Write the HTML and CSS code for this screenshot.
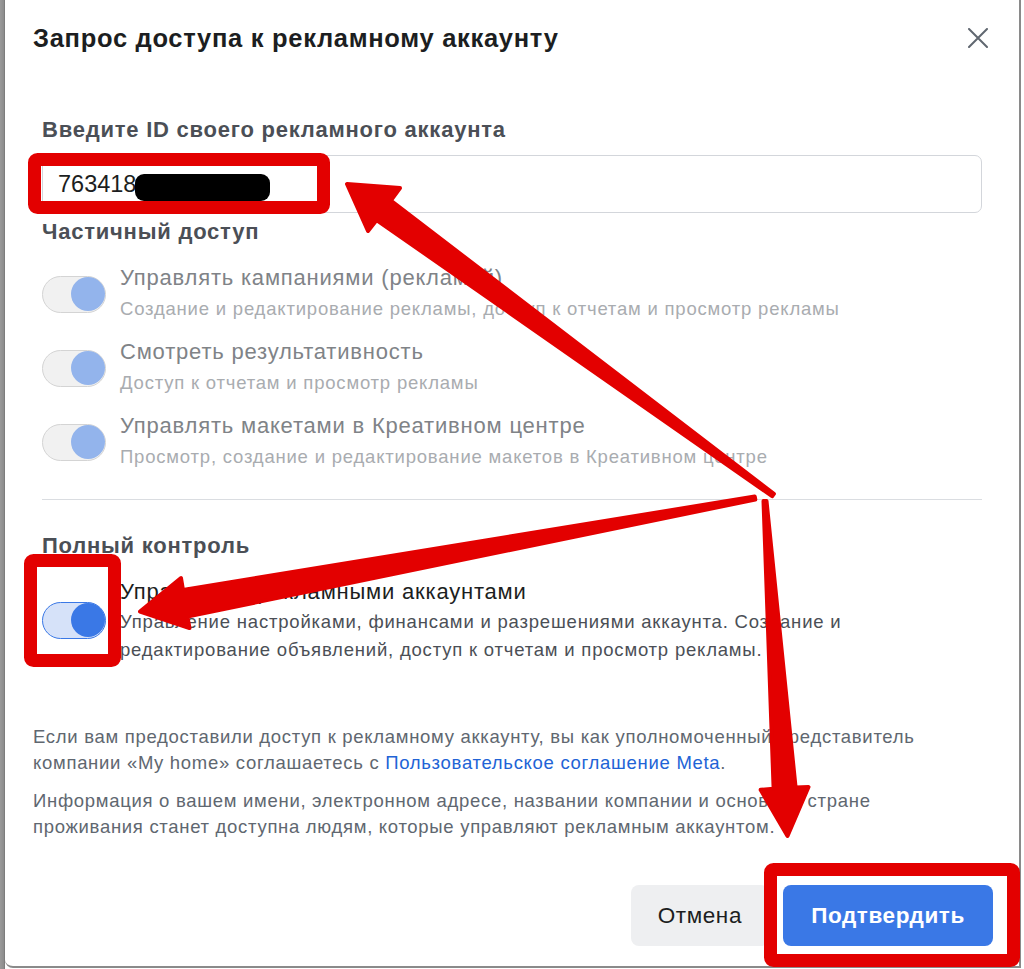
FILE: index.html
```html
<!DOCTYPE html>
<html lang="ru">
<head>
<meta charset="utf-8">
<title>Запрос доступа к рекламному аккаунту</title>
<link rel="stylesheet" href="styles.css">
</head>
<body>
<div class="screen">
  <div class="backdrop"></div>
  <div class="dialog">
    <header class="dlg-head">
      <h1 class="dlg-title">Запрос доступа к рекламному аккаунту</h1>
      <button class="close" aria-label="Закрыть">
        <svg width="20" height="20" viewBox="0 0 20 20"><path d="M1 1 L19 19 M19 1 L1 19" stroke="#606770" stroke-width="2" stroke-linecap="round" fill="none"/></svg>
      </button>
    </header>

    <section class="dlg-body">
      <label class="field-label">Введите ID своего рекламного аккаунта</label>
      <div class="input">763418</div>

      <h2 class="group-title">Частичный доступ</h2>
      <div class="perm-list">
        <div class="perm-row">
          <span class="toggle"><span class="knob"></span></span>
          <div class="perm-text">
            <div class="perm-title">Управлять кампаниями (рекламой)</div>
            <div class="perm-sub">Создание и редактирование рекламы, доступ к отчетам и просмотр рекламы</div>
          </div>
        </div>
        <div class="perm-row">
          <span class="toggle"><span class="knob"></span></span>
          <div class="perm-text">
            <div class="perm-title">Смотреть результативность</div>
            <div class="perm-sub">Доступ к отчетам и просмотр рекламы</div>
          </div>
        </div>
        <div class="perm-row">
          <span class="toggle"><span class="knob"></span></span>
          <div class="perm-text">
            <div class="perm-title">Управлять макетами в Креативном центре</div>
            <div class="perm-sub">Просмотр, создание и редактирование макетов в Креативном центре</div>
          </div>
        </div>
      </div>

      <hr class="divider">

      <h2 class="group-title full-title">Полный контроль</h2>
      <div class="perm-row full-row">
        <span class="toggle on"><span class="knob"></span></span>
        <div class="perm-text">
          <div class="perm-title dark">Управление рекламными аккаунтами</div>
          <div class="perm-sub dark-sub">Управление настройками, финансами и разрешениями аккаунта. Создание и редактирование объявлений, доступ к отчетам и просмотр рекламы.</div>
        </div>
      </div>
    </section>

    <section class="dlg-notes">
      <p>Если вам предоставили доступ к рекламному аккаунту, вы как уполномоченный представитель компании «My home» соглашаетесь с <a href="#">Пользовательское соглашение Meta</a>.</p>
      <p>Информация о вашем имени, электронном адресе, названии компании и основной стране<br>проживания станет доступна людям, которые управляют рекламным аккаунтом.</p>
    </section>

    <footer class="dlg-foot">
      <button class="btn btn-secondary">Отмена</button>
      <button class="btn btn-primary">Подтвердить</button>
    </footer>
  </div>
</div>

<svg class="annot" width="1024" height="969" viewBox="0 0 1024 969">
  <rect x="135" y="174" width="135" height="27" rx="9" fill="#000"/>
  <g fill="none" stroke="#e30000" stroke-width="13">
    <rect x="34.5" y="159.5" width="289" height="48" rx="3"/>
    <rect x="30.5" y="560.5" width="84" height="100" rx="3"/>
    <rect x="770.5" y="869.5" width="243" height="91" rx="3"/>
  </g>
  <g fill="#e30000" stroke="#e30000" stroke-width="4" stroke-linejoin="round">
    <polygon points="347,184 400,188 390.8,200.6 773.9,493.8 772.1,496.2 376.6,220 368,231"/>
    <polygon points="140,611.5 181,578 183,590 754.7,496.5 755.3,499.5 187.4,616.5 189.5,628"/>
    <polygon points="787.5,836 808.5,787 795.6,787.5 766.5,500.9 763.5,501.1 773.6,788.7 760.6,789.8"/>
  </g>
</svg>
</body>
</html>
```

FILE: styles.css
```css
* { box-sizing: border-box; }

html, body {
  margin: 0;
  padding: 0;
  background: #ffffff;
}

body {
  position: relative;
  width: 1024px;
  height: 969px;
  overflow: hidden;
  font-family: "Liberation Sans", Arial, sans-serif;
}

.screen {
  display: flex;
  height: 969px;
}

.backdrop {
  width: 5px;
  flex: none;
  background: linear-gradient(to right, #9a9a9a 0, #8c8c8c 80%, #6e6e6e 100%);
}

.dialog {
  width: 1016px;
  height: 968px;
  flex: none;
  display: flex;
  flex-direction: column;
  background: #fff;
  border-right: 2px solid #8a8a8a;
  border-bottom: 2px solid #8a8a8a;
  border-radius: 8px 0 0 8px;
  padding-top: 24px;
}

.dlg-head {
  display: flex;
  align-items: center;
  justify-content: space-between;
  padding: 0 31px 0 28px;
  height: 28px;
}

.dlg-title {
  margin: 0;
  font-size: 25.5px;
  letter-spacing: 0.7px;
  line-height: 28px;
  font-weight: 700;
  color: #1c1e21;
}

.close {
  width: 20px;
  height: 20px;
  padding: 0;
  border: 0;
  background: none;
  display: flex;
}

.dlg-body {
  padding: 0 37px;
  margin-top: 64px;
  display: flex;
  flex-direction: column;
}

.field-label {
  display: block;
  font-size: 22px;
  letter-spacing: 0.77px;
  line-height: 28px;
  font-weight: 700;
  color: #4b4f56;
}

.input {
  margin-top: 11px;
  height: 58px;
  border: 1px solid #d3d6db;
  border-radius: 7px;
  padding-left: 15px;
  display: flex;
  align-items: center;
  font-size: 23.5px;
  color: #1c1e21;
}

.group-title {
  margin: 5px 0 0;
  font-size: 22px;
  letter-spacing: 0.77px;
  line-height: 28px;
  font-weight: 700;
  color: #4b4f56;
}

.perm-list {
  margin-top: 17px;
  display: flex;
  flex-direction: column;
  gap: 12px;
}

.perm-row {
  display: flex;
  align-items: center;
  gap: 14px;
}

.toggle {
  width: 64px;
  height: 37px;
  flex: none;
  border-radius: 19px;
  border: 1.5px solid #d4d4d4;
  background: #f1f1f1;
  display: flex;
  align-items: center;
  justify-content: flex-end;
}

.knob {
  width: 34px;
  height: 34px;
  border-radius: 50%;
  background: #93b4ec;
}

.toggle.on {
  border-color: #3a78e6;
  background: #d6e2f9;
}

.toggle.on .knob {
  background: #3a78e6;
}

.perm-text {
  display: flex;
  flex-direction: column;
}

.perm-title {
  font-size: 22px;
  letter-spacing: 0.8px;
  line-height: 30px;
  color: #808387;
}

.perm-sub {
  font-size: 18.5px;
  letter-spacing: 0.8px;
  line-height: 32px;
  color: #a9acb0;
}

.divider {
  margin: 26px 0 0;
  border: 0;
  height: 1px;
  background: #dadde1;
}

.full-title {
  margin-top: 32px;
}

.full-row {
  margin-top: 16px;
}

.perm-title.dark {
  color: #1c1e21;
  line-height: 32px;
}

.perm-sub.dark-sub {
  color: #4b4f56;
  line-height: 28px;
}

.dlg-notes {
  margin-top: 60px;
  padding: 0 28px;
}

.dlg-notes p {
  margin: 0 0 12px;
  max-width: 915px;
  font-size: 18.5px;
  letter-spacing: 0.7px;
  line-height: 26px;
  color: #606770;
}

.dlg-notes a {
  color: #2163d6;
  text-decoration: none;
}

.dlg-foot {
  margin-top: 33px;
  display: flex;
  justify-content: flex-end;
  gap: 14px;
  padding-right: 26px;
}

.btn {
  height: 61px;
  border: 0;
  border-radius: 8px;
  font-family: "Liberation Sans", Arial, sans-serif;
  font-size: 22.5px;
  letter-spacing: 0.6px;
}

.btn-secondary {
  padding: 0 27px;
  background: #eeeff1;
  color: #1c1e21;
}

.btn-primary {
  width: 210px;
  background: #3a78e6;
  color: #fff;
  font-weight: 700;
}

.annot {
  position: absolute;
  left: 0;
  top: 0;
  pointer-events: none;
}
```
